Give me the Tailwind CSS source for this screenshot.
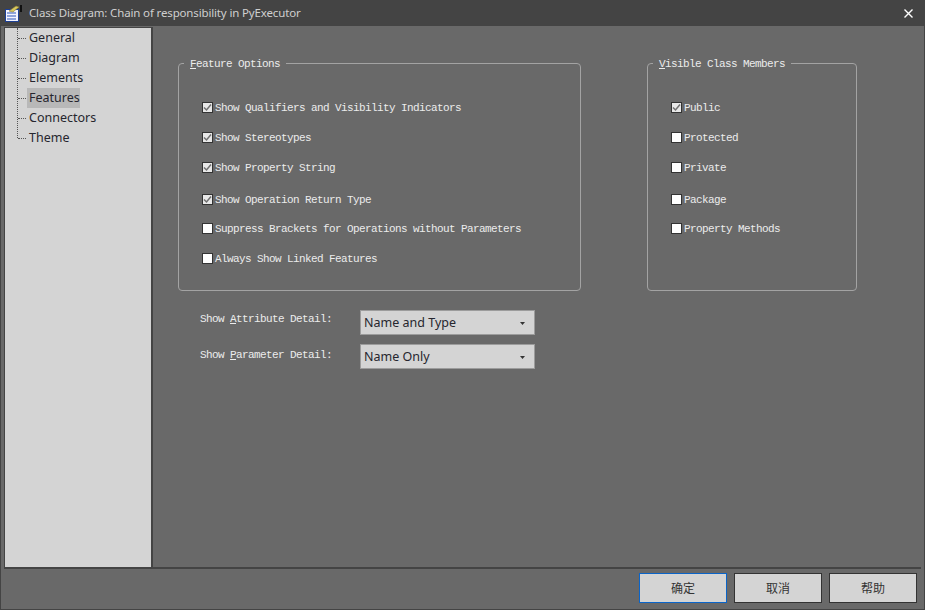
<!doctype html>
<html>
<head>
<meta charset="utf-8">
<title>Class Diagram</title>
<script src="https://cdn.jsdelivr.net/npm/@tailwindcss/browser@4"></script>
</head>
<body class="m-0 overflow-hidden">
<div class="w-[925px] h-[610px] flex flex-col bg-[#696969] border-x border-b border-[#444] font-['Noto_Sans',sans-serif]">
  <!-- Title bar -->
  <header class="h-[26px] -mx-px shrink-0 flex items-center bg-[#444] pl-[5px] pr-[12px]">
    <svg class="w-[18px] h-[18px] mr-[6px]" viewBox="0 0 18 18">
      <rect x="0.5" y="5.5" width="13" height="12" fill="#f4f4ff" stroke="#1c3f94"/>
      <path d="M2 9h9M2 12h9M2 15h9" stroke="#2a55b8"/>
      <path d="M4 7l7-5 3 1-6 5z" fill="#d8c860" stroke="#8a7a30" stroke-width="0.6"/>
      <rect x="15" y="1" width="2" height="7" fill="#111"/>
    </svg>
    <span class="text-[11.5px] tracking-[-0.15px] text-[#cfcfcf]">Class Diagram: Chain of responsibility in PyExecutor</span>
    <svg class="ml-auto w-[9px] h-[9px]" viewBox="0 0 9 9"><path d="M0.5 0.5l8 8M8.5 0.5l-8 8" stroke="#fff" stroke-width="1.4"/></svg>
  </header>

  <div class="flex-1 flex flex-col pl-[3px] pr-[2px] pb-[1px] pt-px min-h-0">
    <div class="flex-1 flex min-h-0">
      <!-- Tree -->
      <nav class="w-[149px] shrink-0 bg-[#d4d4d4] border-l border-t border-r-2 border-[#444] text-[12.5px] text-[#26262e]">
        <div class="ml-[12px] h-[110px] border-l border-dotted border-[#555]">
          <div class="h-5 flex items-center"><span class="w-[8px] mr-px border-t border-dotted border-[#555]"></span><span class="px-[2px]">General</span></div>
          <div class="h-5 flex items-center"><span class="w-[8px] mr-px border-t border-dotted border-[#555]"></span><span class="px-[2px]">Diagram</span></div>
          <div class="h-5 flex items-center"><span class="w-[8px] mr-px border-t border-dotted border-[#555]"></span><span class="px-[2px]">Elements</span></div>
          <div class="h-5 flex items-center"><span class="w-[8px] mr-px border-t border-dotted border-[#555]"></span><span class="px-[2px] h-5 leading-5 w-[53px] bg-[#b8b8b8]">Features</span></div>
          <div class="h-5 flex items-center"><span class="w-[8px] mr-px border-t border-dotted border-[#555]"></span><span class="px-[2px]">Connectors</span></div>
          <div class="h-5 flex items-center"><span class="w-[8px] mr-px border-t border-dotted border-[#555]"></span><span class="px-[2px]">Theme</span></div>
        </div>
      </nav>

      <!-- Features page -->
      <main class="flex-1 pl-[25px] pt-[30px] font-['Liberation_Mono',monospace] text-[11px] tracking-[-0.6px] text-[#ececec]">
        <div class="flex">
          <fieldset class="w-[403px] h-[234px] border border-[#a3a3a3] rounded-[4px] pl-[23px]">
            <legend class="-ml-[18px] px-[6px] h-3 leading-[14px]"><u>F</u>eature Options</legend>
            <label class="flex items-center h-3 mt-[32px] gap-[2px]">
              <span class="w-[11px] h-[11px] border border-[#333] bg-[#e8e8e8] flex items-center justify-center"><svg class="w-[9px] h-[9px]" viewBox="0 0 9 9"><path d="M1 4.5l2.5 2.5 4.5-5.5" fill="none" stroke="#707070" stroke-width="1.5"/></svg></span>
              <span class="pt-[2px]">Show Qualifiers and Visibility Indicators</span>
            </label>
            <label class="flex items-center h-3 mt-[18px] gap-[2px]">
              <span class="w-[11px] h-[11px] border border-[#333] bg-[#e8e8e8] flex items-center justify-center"><svg class="w-[9px] h-[9px]" viewBox="0 0 9 9"><path d="M1 4.5l2.5 2.5 4.5-5.5" fill="none" stroke="#707070" stroke-width="1.5"/></svg></span>
              <span class="pt-[2px]">Show Stereotypes</span>
            </label>
            <label class="flex items-center h-3 mt-[18px] gap-[2px]">
              <span class="w-[11px] h-[11px] border border-[#333] bg-[#e8e8e8] flex items-center justify-center"><svg class="w-[9px] h-[9px]" viewBox="0 0 9 9"><path d="M1 4.5l2.5 2.5 4.5-5.5" fill="none" stroke="#707070" stroke-width="1.5"/></svg></span>
              <span class="pt-[2px]">Show Property String</span>
            </label>
            <label class="flex items-center h-3 mt-[20px] gap-[2px]">
              <span class="w-[11px] h-[11px] border border-[#333] bg-[#e8e8e8] flex items-center justify-center"><svg class="w-[9px] h-[9px]" viewBox="0 0 9 9"><path d="M1 4.5l2.5 2.5 4.5-5.5" fill="none" stroke="#707070" stroke-width="1.5"/></svg></span>
              <span class="pt-[2px]">Show Operation Return Type</span>
            </label>
            <label class="flex items-center h-3 mt-[17px] gap-[2px]">
              <span class="w-[11px] h-[11px] border border-[#333] bg-white"></span>
              <span class="pt-[2px]">Suppress Brackets for Operations without Parameters</span>
            </label>
            <label class="flex items-center h-3 mt-[18px] gap-[2px]">
              <span class="w-[11px] h-[11px] border border-[#333] bg-white"></span>
              <span class="pt-[2px]">Always Show Linked Features</span>
            </label>
          </fieldset>

          <fieldset class="w-[210px] h-[234px] ml-[66px] border border-[#a3a3a3] rounded-[4px] pl-[23px]">
            <legend class="-ml-[18px] px-[6px] h-3 leading-[14px]"><u>V</u>isible Class Members</legend>
            <label class="flex items-center h-3 mt-[32px] gap-[2px]">
              <span class="w-[11px] h-[11px] border border-[#333] bg-[#e8e8e8] flex items-center justify-center"><svg class="w-[9px] h-[9px]" viewBox="0 0 9 9"><path d="M1 4.5l2.5 2.5 4.5-5.5" fill="none" stroke="#707070" stroke-width="1.5"/></svg></span>
              <span class="pt-[2px]">Public</span>
            </label>
            <label class="flex items-center h-3 mt-[18px] gap-[2px]">
              <span class="w-[11px] h-[11px] border border-[#333] bg-white"></span>
              <span class="pt-[2px]">Protected</span>
            </label>
            <label class="flex items-center h-3 mt-[18px] gap-[2px]">
              <span class="w-[11px] h-[11px] border border-[#333] bg-white"></span>
              <span class="pt-[2px]">Private</span>
            </label>
            <label class="flex items-center h-3 mt-[20px] gap-[2px]">
              <span class="w-[11px] h-[11px] border border-[#333] bg-white"></span>
              <span class="pt-[2px]">Package</span>
            </label>
            <label class="flex items-center h-3 mt-[17px] gap-[2px]">
              <span class="w-[11px] h-[11px] border border-[#333] bg-white"></span>
              <span class="pt-[2px]">Property Methods</span>
            </label>
          </fieldset>
        </div>

        <div class="flex items-start pl-[22px] mt-[19px]">
          <span class="w-[160px] h-3 leading-3 mt-[3px]">Show <u>A</u>ttribute Detail:</span>
          <div class="w-[175px] h-[25px] border border-[#9c9c9c] bg-[#d4d4d4] flex items-center pl-[3px] pr-[9px] pt-px font-['Noto_Sans',sans-serif] text-[12.5px] tracking-normal text-[#26262e]">
            Name and Type
            <svg class="ml-auto w-[5px] h-[3px]" viewBox="0 0 5 3"><path d="M0 0h5L2.5 3z" fill="#333"/></svg>
          </div>
        </div>
        <div class="flex items-start pl-[22px] mt-[9px]">
          <span class="w-[160px] h-3 leading-3 mt-[5px]">Show <u>P</u>arameter Detail:</span>
          <div class="w-[175px] h-[25px] border border-[#9c9c9c] bg-[#d4d4d4] flex items-center pl-[3px] pr-[9px] pt-px font-['Noto_Sans',sans-serif] text-[12.5px] tracking-normal text-[#26262e]">
            Name Only
            <svg class="ml-auto w-[5px] h-[3px]" viewBox="0 0 5 3"><path d="M0 0h5L2.5 3z" fill="#333"/></svg>
          </div>
        </div>
      </main>
    </div>

    <!-- Footer buttons -->
    <footer class="h-[41px] shrink-0 border-t-2 border-[#444] mr-px flex justify-end gap-[7px] pt-[4px] pr-[4px] font-['Noto_Sans_CJK_SC',sans-serif] text-[12px] text-[#333]">
      <button class="w-[88px] h-[30px] bg-[#d4d4d4] border border-[#0a64c8]">确定</button>
      <button class="w-[88px] h-[30px] bg-[#d4d4d4] border border-[#333]">取消</button>
      <button class="w-[88px] h-[30px] bg-[#d4d4d4] border border-[#333]">帮助</button>
    </footer>
  </div>
</div>
</body>
</html>
